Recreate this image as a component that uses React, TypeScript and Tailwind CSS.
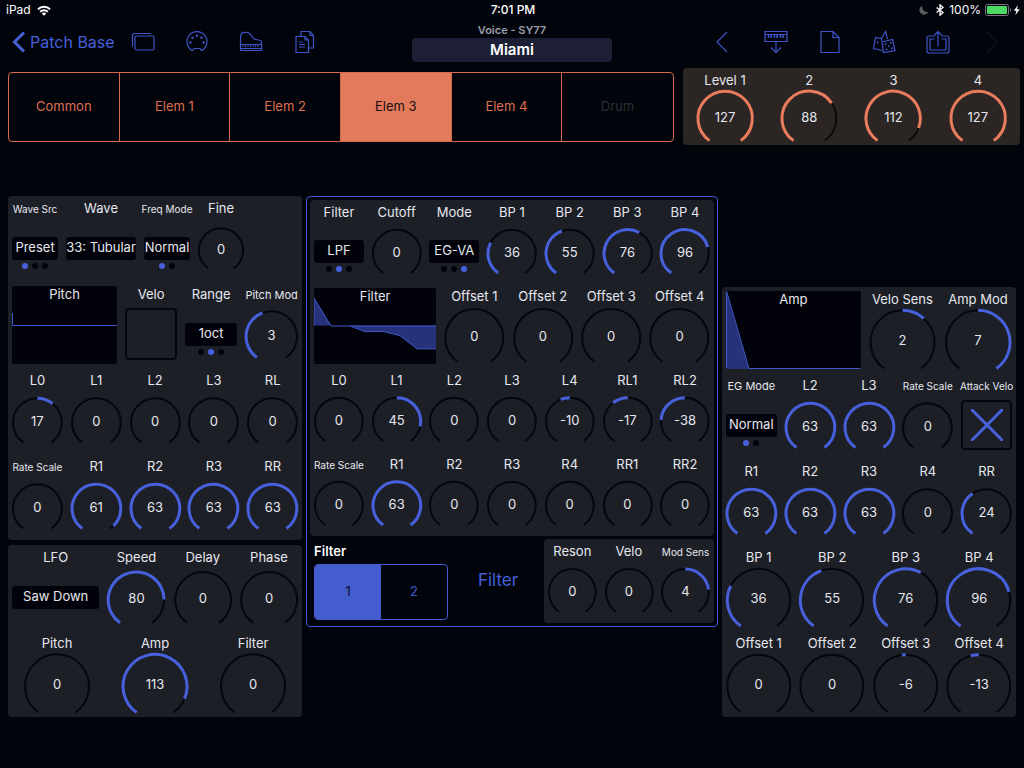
import { useId, useState } from "react";
import type { ReactNode } from "react";

type Tone = "blue" | "orange";

const SWEEP = 145;

const labelSizes = {
  base: "text-[13px]",
  sm: "text-[11px]",
  xs: "text-[10px]",
};

type LabelSize = keyof typeof labelSizes;

function polar(angle: number, radius: number) {
  const rad = (angle * Math.PI) / 180;
  return `${(Math.sin(rad) * radius).toFixed(2)} ${(-Math.cos(rad) * radius).toFixed(2)}`;
}

function arc(from: number, to: number, radius = 24) {
  const [a, b] = from < to ? [from, to] : [to, from];
  return `M${polar(a, radius)}A${radius} ${radius} 0 ${b - a > 180 ? 1 : 0} 1 ${polar(b, radius)}`;
}

function Cell({
  label,
  size = "base",
  htmlFor,
  children,
}: {
  label: string;
  size?: LabelSize;
  htmlFor: string;
  children: ReactNode;
}) {
  return (
    <div className="flex min-h-0 min-w-0 flex-col p-1">
      <label
        htmlFor={htmlFor}
        className={`flex h-[18px] shrink-0 items-center justify-center whitespace-nowrap ${labelSizes[size]}`}
      >
        {label}
      </label>
      {children}
    </div>
  );
}

type KnobProps = {
  label: string;
  value: number;
  max?: number;
  bipolar?: boolean;
  size?: LabelSize;
  tone?: Tone;
};

function Knob({ label, value: initial, max = 127, bipolar = false, size, tone = "blue" }: KnobProps) {
  const id = useId();
  const [value, setValue] = useState(initial);
  const start = bipolar ? 0 : -SWEEP;
  const end = bipolar ? (value / max) * SWEEP : -SWEEP + (value / max) * SWEEP * 2;

  return (
    <Cell label={label} size={size} htmlFor={id}>
      <div className="grid min-h-0 flex-1 grid-cols-1 grid-rows-1">
        <svg viewBox="-25 -25 50 45" fill="none" className="col-start-1 row-start-1 h-full min-h-0 w-full overflow-visible">
          <path d={arc(-SWEEP, SWEEP)} stroke={tone === "blue" ? "#05060d" : "#0d0908"} strokeWidth={2} vectorEffect="non-scaling-stroke" />
          {end !== start && (
            <path d={arc(start, end)} stroke={tone === "blue" ? "#4761dc" : "#e97c5c"} strokeWidth={3} vectorEffect="non-scaling-stroke" />
          )}
        </svg>
        <output htmlFor={id} className="col-start-1 row-start-1 flex items-center justify-center pt-1 text-[13px]">
          {value}
        </output>
        <input
          id={id}
          type="range"
          min={bipolar ? -max : 0}
          max={max}
          value={value}
          onChange={(e) => setValue(Number(e.target.value))}
          className="col-start-1 row-start-1 h-full w-full cursor-pointer opacity-0"
        />
      </div>
    </Cell>
  );
}

function Picker({
  label,
  options,
  value,
  dots = true,
  size,
}: {
  label: string;
  options: string[];
  value: string;
  dots?: boolean;
  size?: LabelSize;
}) {
  const id = useId();
  const [selected, setSelected] = useState(value);

  return (
    <Cell label={label} size={size} htmlFor={id}>
      <div className="grid min-h-0 flex-1 grid-cols-1 grid-rows-[1fr_23px_1fr]">
        <select
          id={id}
          value={selected}
          onChange={(e) => setSelected(e.target.value)}
          className="row-start-2 w-full min-w-0 appearance-none rounded-[3px] bg-[#02030a] text-center text-[13px] [text-align-last:center]"
        >
          {options.map((o) => (
            <option key={o}>{o}</option>
          ))}
        </select>
        {dots && (
          <div className="row-start-3 flex justify-center gap-1 pt-[3px]">
            {options.map((o) => (
              <span key={o} className={`size-1.5 rounded-full ${o === selected ? "bg-[#4761dc]" : "bg-[#02030a]"}`} />
            ))}
          </div>
        )}
      </div>
    </Cell>
  );
}

function Toggle({ label, on = false, size }: { label: string; on?: boolean; size?: LabelSize }) {
  const id = useId();
  const [checked, setChecked] = useState(on);

  return (
    <Cell label={label} size={size} htmlFor={id}>
      <div className="grid min-h-0 flex-1 place-items-center">
        <input
          id={id}
          type="checkbox"
          checked={checked}
          onChange={(e) => setChecked(e.target.checked)}
          className="col-start-1 row-start-1 aspect-square w-full appearance-none rounded-[4px] border-2 border-[#05060d]"
        />
        {checked && (
          <svg viewBox="0 0 32 32" className="pointer-events-none col-start-1 row-start-1 size-8" stroke="#4761dc" strokeWidth={3} strokeLinecap="round">
            <path d="M1 1 31 31M31 1 1 31" />
          </svg>
        )}
      </div>
    </Cell>
  );
}

function Envelope({ label, viewBox, fill, line }: { label: string; viewBox: string; fill?: string; line: string }) {
  return (
    <div className="min-h-0 min-w-0 p-1">
      <div className="grid h-full grid-cols-1 grid-rows-1 overflow-hidden rounded-[2px] bg-[#02030a]">
        <svg viewBox={viewBox} preserveAspectRatio="none" className="col-start-1 row-start-1 h-full min-h-0 w-full" fill="none">
          {fill && <path d={fill} fill="#27327a" />}
          <path d={line} stroke="#4058cc" strokeWidth={1} vectorEffect="non-scaling-stroke" />
        </svg>
        <div className="col-start-1 row-start-1 flex h-[18px] items-center justify-center text-[13px]">{label}</div>
      </div>
    </div>
  );
}

const rowHeights = {
  tall: "h-[86px]",
  short: "h-[84px]",
};

function Row({ cols, height = "tall", children }: { cols: string; height?: keyof typeof rowHeights; children: ReactNode }) {
  return <div className={`grid grid-rows-1 ${rowHeights[height]} ${cols}`}>{children}</div>;
}

function Panel({ children }: { children: ReactNode }) {
  return <section className="rounded-[4px] bg-[#1d1f27]">{children}</section>;
}

function StatusBar() {
  return (
    <div className="grid h-5 grid-cols-3 items-center pr-1 pl-1.5 text-[12px] text-white">
      <div className="flex items-center gap-1.5">
        iPad
        <svg width="14" height="11" viewBox="0 0 14 11" fill="none" stroke="white" strokeWidth="2">
          <path d="M1 4.2a8.6 8.6 0 0 1 12 0M3.2 6.8a5.4 5.4 0 0 1 7.6 0" />
          <path d="M7 10.8 4.8 8.6a3.2 3.2 0 0 1 4.4 0Z" fill="white" stroke="none" />
        </svg>
      </div>
      <div className="text-center font-medium">7:01 PM</div>
      <div className="flex items-center justify-end gap-1">
        <svg width="10" height="10" viewBox="0 0 10 10">
          <path d="M3.4.8a4.6 4.6 0 1 0 5.9 6A4.8 4.8 0 0 1 3.4.8Z" fill="#5c5d63" />
        </svg>
        <svg width="10" height="12" viewBox="0 0 10 12" fill="none" stroke="white" strokeWidth="1.3" className="ml-0.5">
          <path d="M1.6 3.4 8 8.6 5 11.2V.8l3 2.6-6.4 5.2" />
        </svg>
        <span>100%</span>
        <svg width="35" height="12" viewBox="0 0 35 12">
          <rect x=".5" y=".5" width="23" height="11" rx="2" fill="none" stroke="#76777c" />
          <rect x="2" y="2" width="20" height="8" rx="1" fill="#4cd964" />
          <path d="M25 4v4a2.2 2.2 0 0 0 0-4Z" fill="#76777c" />
          <path d="M33 1 28.800 6.800h2.600L30.300 11.200 34.800 5.200H32Z" fill="white" />
        </svg>
      </div>
    </div>
  );
}

function NavButton({ label, dim = false, children }: { label: string; dim?: boolean; children: ReactNode }) {
  return (
    <button aria-label={label} disabled={dim} className={`flex h-11 w-[54px] shrink-0 items-center justify-center ${dim ? "text-[#12151f]" : "text-[#3f54c8]"}`}>
      <svg width="24" height="24" viewBox="0 0 24 24" fill="none" stroke="currentColor" strokeWidth="1.2">
        {children}
      </svg>
    </button>
  );
}

function NavBar() {
  return (
    <nav className="grid h-11 grid-cols-[1fr_200px_1fr]">
      <div className="flex items-center pl-3">
        <button className="flex w-[104px] shrink-0 items-center gap-1 whitespace-nowrap text-[16px] text-[#4560d8]">
          <svg width="14" height="22" viewBox="0 0 14 22" fill="none" stroke="currentColor" strokeWidth="3" className="shrink-0">
            <path d="M12 1.5 2.5 11 12 20.5" />
          </svg>
          Patch Base
        </button>
        <NavButton label="Banks">
          <path d="M1.500 16.500V5.500a2 2 0 0 1 2-2H20" />
          <rect x="4" y="6" width="19" height="14" rx="1.500" />
        </NavButton>
        <NavButton label="MIDI">
          <path d="M7.500 20.600a10 10 0 1 1 9 0l-1.500-2.100H9Z" />
          <g fill="currentColor" stroke="none">
            <circle cx="5.500" cy="12.500" r="1.200" />
            <circle cx="7.500" cy="7.800" r="1.200" />
            <circle cx="12" cy="5.800" r="1.200" />
            <circle cx="16.500" cy="7.800" r="1.200" />
            <circle cx="18.500" cy="12.500" r="1.200" />
          </g>
        </NavButton>
        <NavButton label="Keyboard">
          <path d="M1.500 20.500V7C1.500 1.500 8.500 1 11.500 4.500c2.200 2.800 2.500 4.500 5 5 2.500.500 6 0 6 3v8ZM1.500 14.500h21M1.500 18.500h21" />
          <path d="M4 14.500v2.500M6.500 14.500v2.500M9 14.500v2.500M11.500 14.500v2.500M14 14.500v2.500M16.500 14.500v2.500M19 14.500v2.500" strokeWidth=".9" />
        </NavButton>
        <NavButton label="Copy patch">
          <path d="M3 6.500h9l3.500 3.500V22.500H3ZM12 6.500V10h3.500" />
          <path d="M8 6.500v-5h9l3.500 4V18h-5M17 1.500v4h3.500" />
          <path d="M6 12h4M6 14.500h6M6 17h6" />
        </NavButton>
      </div>

      <div className="flex flex-col text-center">
        <div className="h-[18px] text-[11px] leading-[20px] font-semibold text-[#9a9ca8]">Voice - SY77</div>
        <button className="h-6 w-full rounded-[4px] bg-[#1c1f35] text-[15px] leading-6 font-semibold text-white">Miami</button>
      </div>

      <div className="flex items-center justify-end pr-[5px]">
        <NavButton label="Previous patch">
          <path d="M17 2 7 12l10 10" />
        </NavButton>
        <NavButton label="Receive from synth">
          <path d="M1 1.500h22v10H1ZM1 4.500h22M12 11.500V22M7 17.500l5 5 5-5" />
          <path d="M4.500 4.500v3.500M7 4.500v3.500M10.500 4.500v3.500M13 4.500v3.500M16.500 4.500v3.500M19 4.500v3.500" strokeWidth="1.500" />
        </NavButton>
        <NavButton label="New patch">
          <path d="M3 1.500h12l6 6v15H3ZM15 1.500v6h6" />
        </NavButton>
        <NavButton label="Randomize">
          <path d="M9.500 8.500 3.500 7.500 1.500 18.500l8.500 2M9.500 8.500 13.500 1.500 15.500 9M9.500 8.500 10 11" />
          <path d="m10 12 10.500-2.500 2.500 11-11.500 2Z" />
          <g fill="currentColor" stroke="none">
            <circle cx="13.500" cy="14" r="1" />
            <circle cx="18.800" cy="12.800" r="1" />
            <circle cx="16.700" cy="16.200" r="1" />
            <circle cx="14.500" cy="19.500" r="1" />
            <circle cx="20" cy="18.300" r="1" />
            <circle cx="5.500" cy="12.500" r="1" />
          </g>
        </NavButton>
        <NavButton label="Share">
          <path d="M8.500 6H3a2 2 0 0 0-2 2v13a1.800 1.800 0 0 0 2 2h18a1.800 1.800 0 0 0 2-2V8a2 2 0 0 0-2-2h-5.500" />
          <path d="M8.500 9H4v11h16V9h-4.500M12 16.500V1.500M8 5.500l4-4 4 4" />
        </NavButton>
        <NavButton label="Next patch" dim>
          <path d="m7 2 10 10L7 22" />
        </NavButton>
      </div>
    </nav>
  );
}

const sections = ["Common", "Elem 1", "Elem 2", "Elem 3", "Elem 4", "Drum"];

function SectionTabs() {
  const [active, setActive] = useState("Elem 3");

  return (
    <div className="grid h-[70px] grid-cols-6 divide-x divide-[#d9694c] overflow-hidden rounded-[4px] border border-[#d9694c]">
      {sections.map((name) => (
        <button
          key={name}
          aria-pressed={name === active}
          disabled={name === "Drum"}
          onClick={() => setActive(name)}
          className={`text-[13px] ${
            name === active ? "bg-[#e27a5b] text-[#1b0f10]" : name === "Drum" ? "text-[#2e2f33]" : "text-[#de6e50]"
          }`}
        >
          {name}
        </button>
      ))}
    </div>
  );
}

function LevelPanel() {
  return (
    <section className="grid h-[77px] grid-cols-4 grid-rows-1 rounded-[4px] bg-[#2b2624]">
      <Knob label="Level 1" value={127} tone="orange" />
      <Knob label="2" value={88} tone="orange" />
      <Knob label="3" value={112} tone="orange" />
      <Knob label="4" value={127} tone="orange" />
    </section>
  );
}

function PitchColumn() {
  return (
    <div className="flex flex-col gap-[5px]">
      <Panel>
        <Row cols="grid-cols-[54fr_78fr_54fr_54fr_54fr]">
          <Picker label="Wave Src" size="xs" options={["Preset", "AFM", "Card"]} value="Preset" />
          <Picker label="Wave" options={["33: Tubular"]} value="33: Tubular" dots={false} />
          <Picker label="Freq Mode" size="xs" options={["Normal", "Fixed"]} value="Normal" />
          <Knob label="Fine" value={0} max={64} bipolar />
        </Row>
        <Row cols="grid-cols-[113fr_60fr_60fr_61fr]">
          <Envelope label="Pitch" viewBox="0 0 105 78" line="M.5 27V39.500H105" />
          <Toggle label="Velo" />
          <Picker label="Range" options={["1/2oct", "1oct", "2oct"]} value="1oct" />
          <Knob label="Pitch Mod" size="sm" value={3} max={7} />
        </Row>
        <Row cols="grid-cols-5">
          <Knob label="L0" value={17} max={64} bipolar />
          <Knob label="L1" value={0} max={64} bipolar />
          <Knob label="L2" value={0} max={64} bipolar />
          <Knob label="L3" value={0} max={64} bipolar />
          <Knob label="RL" value={0} max={64} bipolar />
        </Row>
        <Row cols="grid-cols-5">
          <Knob label="Rate Scale" size="xs" value={0} max={7} bipolar />
          <Knob label="R1" value={61} max={63} />
          <Knob label="R2" value={63} max={63} />
          <Knob label="R3" value={63} max={63} />
          <Knob label="RR" value={63} max={63} />
        </Row>
      </Panel>
      <Panel>
        <Row cols="grid-cols-[95fr_66fr_66fr_66fr]">
          <Picker label="LFO" options={["Triangle", "Saw Down", "Saw Up", "Square", "Sine", "S/H"]} value="Saw Down" dots={false} />
          <Knob label="Speed" value={80} max={99} />
          <Knob label="Delay" value={0} max={99} />
          <Knob label="Phase" value={0} max={99} />
        </Row>
        <Row cols="grid-cols-3">
          <Knob label="Pitch" value={0} />
          <Knob label="Amp" value={113} />
          <Knob label="Filter" value={0} />
        </Row>
      </Panel>
    </div>
  );
}

function FilterColumn() {
  const [filter, setFilter] = useState(1);

  return (
    <div className="flex flex-col gap-[3px] self-start rounded-[4px] border border-[#4058cc] p-[3px]">
      <Panel>
        <Row height="short" cols="grid-cols-7">
          <Picker label="Filter" options={["Thru", "LPF", "HPF"]} value="LPF" />
          <Knob label="Cutoff" value={0} />
          <Picker label="Mode" options={["EG", "LFO", "EG-VA"]} value="EG-VA" />
          <Knob label="BP 1" value={36} />
          <Knob label="BP 2" value={55} />
          <Knob label="BP 3" value={76} />
          <Knob label="BP 4" value={96} />
        </Row>
        <Row height="short" cols="grid-cols-[19fr_10fr_10fr_10fr_10fr]">
          <Envelope
            label="Filter"
            viewBox="0 0 122 75"
            fill="M0 10 17 37H36L51 43H70L86 47 103 60H122V37H0Z"
            line="M0 37.500V10L17 37.500H36L51 43H70L86 47 103 60H122M36 37.500H122"
          />
          <Knob label="Offset 1" value={0} bipolar />
          <Knob label="Offset 2" value={0} bipolar />
          <Knob label="Offset 3" value={0} bipolar />
          <Knob label="Offset 4" value={0} bipolar />
        </Row>
        <Row height="short" cols="grid-cols-7">
          <Knob label="L0" value={0} max={64} bipolar />
          <Knob label="L1" value={45} max={64} bipolar />
          <Knob label="L2" value={0} max={64} bipolar />
          <Knob label="L3" value={0} max={64} bipolar />
          <Knob label="L4" value={-10} max={64} bipolar />
          <Knob label="RL1" value={-17} max={64} bipolar />
          <Knob label="RL2" value={-38} max={64} bipolar />
        </Row>
        <Row height="short" cols="grid-cols-7">
          <Knob label="Rate Scale" size="xs" value={0} max={7} bipolar />
          <Knob label="R1" value={63} max={63} />
          <Knob label="R2" value={0} max={63} />
          <Knob label="R3" value={0} max={63} />
          <Knob label="R4" value={0} max={63} />
          <Knob label="RR1" value={0} max={63} />
          <Knob label="RR2" value={0} max={63} />
        </Row>
      </Panel>
      <Row height="short" cols="grid-cols-[142fr_92fr_170fr]">
        <div className="flex flex-col px-1 pt-1 pb-[3px]">
          <h2 className="flex h-[18px] items-center text-[13px] font-semibold text-white">Filter</h2>
          <div className="mt-[3px] grid flex-1 grid-cols-2 overflow-hidden rounded-[4px] border border-[#435cce]">
            {[1, 2].map((n) => (
              <button
                key={n}
                aria-pressed={n === filter}
                onClick={() => setFilter(n)}
                className={`text-[13px] ${n === filter ? "bg-[#435cce] text-[#0a0e2a]" : "text-[#435cce]"}`}
              >
                {n}
              </button>
            ))}
          </div>
        </div>
        <button className="text-[17px] text-[#4560d8]">Filter</button>
        <div className="grid grid-cols-3 grid-rows-1 rounded-[4px] bg-[#1d1f27]">
          <Knob label="Reson" value={0} max={99} />
          <Knob label="Velo" value={0} max={7} bipolar />
          <Knob label="Mod Sens" size="xs" value={4} max={7} bipolar />
        </div>
      </Row>
    </div>
  );
}

function AmpColumn() {
  return (
    <div className="self-end">
      <Panel>
        <Row cols="grid-cols-[143fr_75fr_76fr]">
          <Envelope label="Amp" viewBox="0 0 135 78" fill="M0 0 23 78H0Z" line="M.5 78V0L23 77.500H135" />
          <Knob label="Velo Sens" value={2} max={7} bipolar />
          <Knob label="Amp Mod" value={7} max={7} bipolar />
        </Row>
        <Row cols="grid-cols-5">
          <Picker label="EG Mode" size="sm" options={["Normal", "Hold"]} value="Normal" />
          <Knob label="L2" value={63} max={63} />
          <Knob label="L3" value={63} max={63} />
          <Knob label="Rate Scale" size="xs" value={0} max={7} bipolar />
          <Toggle label="Attack Velo" size="xs" on />
        </Row>
        <Row cols="grid-cols-5">
          <Knob label="R1" value={63} max={63} />
          <Knob label="R2" value={63} max={63} />
          <Knob label="R3" value={63} max={63} />
          <Knob label="R4" value={0} max={63} />
          <Knob label="RR" value={24} max={63} />
        </Row>
        <Row cols="grid-cols-4">
          <Knob label="BP 1" value={36} />
          <Knob label="BP 2" value={55} />
          <Knob label="BP 3" value={76} />
          <Knob label="BP 4" value={96} />
        </Row>
        <Row cols="grid-cols-4">
          <Knob label="Offset 1" value={0} bipolar />
          <Knob label="Offset 2" value={0} bipolar />
          <Knob label="Offset 3" value={-6} bipolar />
          <Knob label="Offset 4" value={-13} bipolar />
        </Row>
      </Panel>
    </div>
  );
}

export default function App() {
  return (
    <div className="min-h-screen bg-[#02040b] font-['Inter','Liberation_Sans',sans-serif] text-[#e6e7ee]">
      <StatusBar />
      <NavBar />
      <header className="grid grid-cols-[79fr_40fr] items-center gap-[9px] pt-1 pr-1 pl-2">
        <SectionTabs />
        <LevelPanel />
      </header>
      <main className="mt-[51px] grid grid-cols-[5fr_7fr_5fr] gap-1 px-2">
        <PitchColumn />
        <FilterColumn />
        <AmpColumn />
      </main>
    </div>
  );
}
